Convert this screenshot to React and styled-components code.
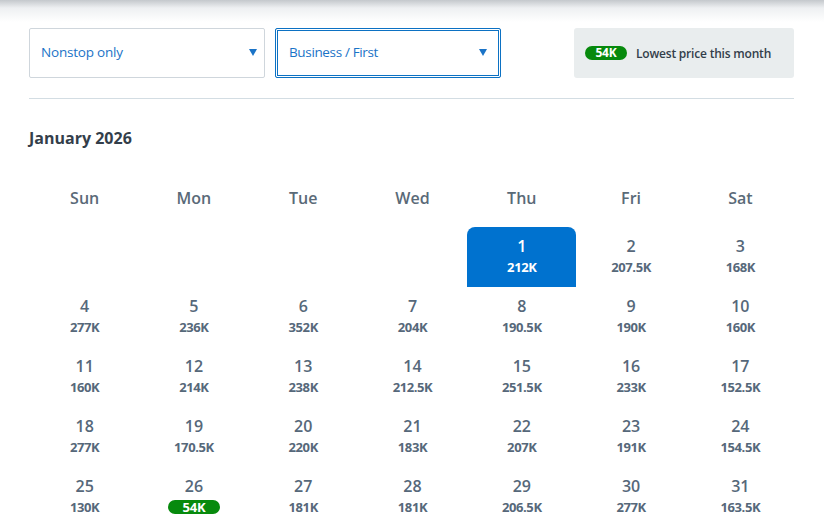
import React from "react";
import styled, { createGlobalStyle } from "styled-components";

const Global = createGlobalStyle`
  html, body { margin: 0; padding: 0; background: #fff; }
  body { font-family: "Open Sans", "Liberation Sans", sans-serif; }
  * { box-sizing: border-box; }
`;

const Page = styled.div`
  width: 824px;
  height: 530px;
  overflow: hidden;
  background: linear-gradient(to bottom, #c4c8cc 0px, #eef0f2 8px, #ffffff 22px);
  padding: 28px 30px 0 29px;
`;

const Toolbar = styled.div`
  display: flex;
  align-items: stretch;
  height: 50px;
  gap: 10px;
`;

const Select = styled.div`
  width: ${(p) => p.$w}px;
  display: flex;
  align-items: center;
  justify-content: space-between;
  padding: 0 ${(p) => (p.$focused ? 13 : 7)}px 0 ${(p) => (p.$focused ? 13 : 11)}px;
  border: 1px solid ${(p) => (p.$focused ? "#0c71c3" : "#cfd6dc")};
  border-radius: 2px;
  background: #fff;
  box-shadow: ${(p) => (p.$focused ? "inset 0 0 0 1px #fff, inset 0 0 0 2px #0c71c3" : "none")};
  color: #1a73c7;
  font-size: 13.5px;
  letter-spacing: ${(p) => (p.$focused ? "-0.35px" : "-0.2px")};
  line-height: 20px;
  padding-bottom: 2px;
`;

const Arrow = styled.span`
  width: 0;
  height: 0;
  border-left: 4.5px solid transparent;
  border-right: 4.5px solid transparent;
  border-top: 7px solid #1a73c7;
`;

const Legend = styled.div`
  margin-left: auto;
  width: 220px;
  background: #e9edee;
  border-radius: 3px;
  display: flex;
  align-items: center;
  gap: 9px;
  padding-left: 11px;
  color: #333e4a;
  font-size: 12px;
  font-weight: 600;
  letter-spacing: -0.2px;
`;

const Pill = styled.span`
  display: inline-flex;
  align-items: center;
  justify-content: center;
  width: ${(p) => p.$w}px;
  height: 14px;
  border-radius: 7px;
  background: #078a0d;
  color: #fff;
  font-size: ${(p) => p.$fs || 12}px;
  font-weight: 700;
  letter-spacing: -0.2px;
  line-height: 1;
`;

const Divider = styled.hr`
  border: 0;
  border-top: 1px solid #d3dde3;
  margin: 20px 0 0 0;
`;

const Month = styled.h2`
  margin: 27px 0 0 0;
  font-size: 16px;
  font-weight: 700;
  color: #333e4a;
  letter-spacing: 0;
  line-height: 24px;
`;

const Grid = styled.div`
  display: grid;
  grid-template-columns: repeat(7, 1fr);
  margin-top: 37px;
  padding-left: 1px;
  margin-right: -1px;
`;

const DayHead = styled.div`
  text-align: center;
  font-size: 16px;
  font-weight: 600;
  color: #5a6a78;
  line-height: 22px;
  height: 40px;
`;

const Cell = styled.div`
  height: 60px;
  display: flex;
  flex-direction: column;
  align-items: center;
  padding-top: 8px;
  border-radius: 8px 8px 0 0;
  background: ${(p) => (p.$selected ? "#0072cf" : "transparent")};
  color: ${(p) => (p.$selected ? "#fff" : "#56687a")};
`;

const DayNum = styled.div`
  font-size: 16px;
  font-weight: 600;
  line-height: 22px;
`;

const Price = styled.div`
  font-size: 13px;
  font-weight: 700;
  line-height: 16px;
  margin-top: 2px;
  letter-spacing: -0.4px;
`;

const PriceWrap = styled.div`
  margin-top: 2px;
  height: 16px;
  display: flex;
  align-items: center;
`;

const prices = {
  1: "212K", 2: "207.5K", 3: "168K", 4: "277K", 5: "236K", 6: "352K", 7: "204K",
  8: "190.5K", 9: "190K", 10: "160K", 11: "160K", 12: "214K", 13: "238K", 14: "212.5K",
  15: "251.5K", 16: "233K", 17: "152.5K", 18: "277K", 19: "170.5K", 20: "220K",
  21: "183K", 22: "207K", 23: "191K", 24: "154.5K", 25: "130K", 26: "54K",
  27: "181K", 28: "181K", 29: "206.5K", 30: "277K", 31: "163.5K",
};

const days = ["Sun", "Mon", "Tue", "Wed", "Thu", "Fri", "Sat"];

export default function App() {
  const cells = [];
  for (let i = 0; i < 4; i++) cells.push(<Cell key={"e" + i} />);
  for (let d = 1; d <= 31; d++) {
    const lowest = prices[d] === "54K";
    cells.push(
      <Cell key={d} $selected={d === 1}>
        <DayNum>{d}</DayNum>
        {lowest ? (
          <PriceWrap>
            <Pill $w={52} $fs={13}>{prices[d]}</Pill>
          </PriceWrap>
        ) : (
          <Price>{prices[d]}</Price>
        )}
      </Cell>
    );
  }
  return (
    <Page>
      <Global />
      <Toolbar>
        <Select $w={236}>
          <span>Nonstop only</span>
          <Arrow />
        </Select>
        <Select $w={226} $focused>
          <span>Business / First</span>
          <Arrow />
        </Select>
        <Legend>
          <Pill $w={42}>54K</Pill>
          <span>Lowest price this month</span>
        </Legend>
      </Toolbar>
      <Divider />
      <Month>January 2026</Month>
      <Grid>
        {days.map((d) => (
          <DayHead key={d}>{d}</DayHead>
        ))}
        {cells}
      </Grid>
    </Page>
  );
}
